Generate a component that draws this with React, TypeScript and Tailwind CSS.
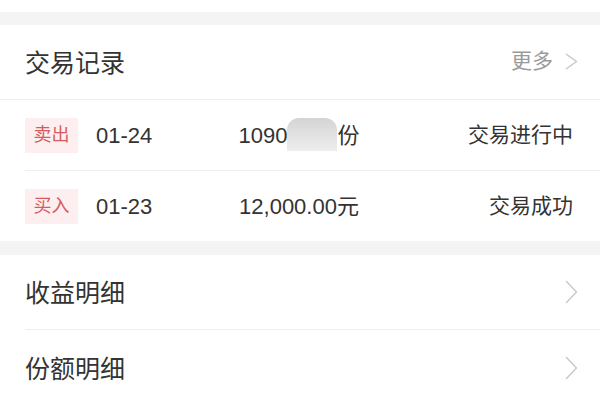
import React from 'react'

const font = { fontFamily: '"Liberation Sans", "Noto Sans CJK SC", sans-serif' }

interface Trade { kind: string; date: string; amount: React.ReactNode; status: string }

const trades: Trade[] = [
  {
    kind: '卖出',
    date: '01-24',
    amount: (
      <>
        1090
        <span className="inline-block w-[50px] h-[33px] align-middle -mt-1 rounded-t-[12px] bg-gradient-to-b from-[#d4d4d4] to-[#eeeeee]" />
        份
      </>
    ),
    status: '交易进行中',
  },
  { kind: '买入', date: '01-23', amount: '12,000.00元', status: '交易成功' },
]

function Chevron({ w, h }: { w: number; h: number }) {
  return (
    <svg width={w} height={h} viewBox={`0 0 ${w} ${h}`} fill="none">
      <path d={`M1 1 L${w - 1.5} ${h / 2} L1 ${h - 1}`} stroke="#c6c6c6" strokeWidth="1.3" />
    </svg>
  )
}

export default function App() {
  return (
    <div className="w-[600px] h-[400px] overflow-hidden bg-white text-[#333]" style={font}>
      <div className="h-[12px] bg-white" />
      <div className="h-[13px] bg-[#f4f4f4]" />

      {/* 交易记录 */}
      <div className="flex items-center justify-between h-[75px] pl-[25px] pr-[22px] border-b border-[#eeeeee]">
        <span className="text-[25px] mt-[3px]">交易记录</span>
        <div className="flex items-center gap-[12px] -mt-[2px]">
          <span className="text-[21px] text-[#9a9a9a]">更多</span>
          <Chevron w={13} h={17} />
        </div>
      </div>

      {trades.map((t, i) => (
        <div key={t.date} className="pl-[25px]">
          <div
            className={`grid grid-cols-[1fr_auto_1fr] items-center pr-[27px] ${i === 0 ? 'h-[71px] border-b border-[#efefef]' : 'h-[70px]'}`}
          >
            <div className="flex items-center">
              <span className="w-[53px] h-[35px] flex items-center justify-center bg-[#fdefef] text-[#d65b5f] text-[18px]">
                {t.kind}
              </span>
              <span className="ml-[18px] text-[22px]">{t.date}</span>
            </div>
            <span className="text-[22px] whitespace-nowrap">{t.amount}</span>
            <span className="text-[21px] text-right">{t.status}</span>
          </div>
        </div>
      ))}

      <div className="h-[14px] bg-[#f4f4f4]" />

      {['收益明细', '份额明细'].map((label, i) => (
        <div key={label} className="pl-[25px]">
          <div
            className={`flex items-center justify-between pr-[22px] h-[75px] ${i === 0 ? 'border-b border-[#efefef]' : ''}`}
          >
            <span className="text-[25px] mt-[4px]">{label}</span>
            <Chevron w={13} h={24} />
          </div>
        </div>
      ))}
    </div>
  )
}
